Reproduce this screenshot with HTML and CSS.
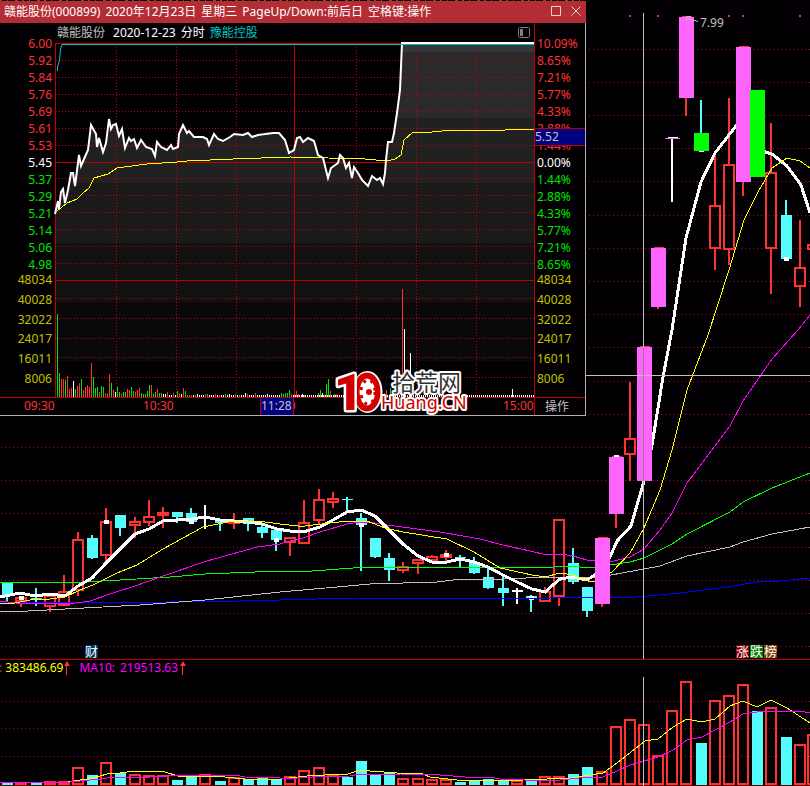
FILE: index.html
```html
<!DOCTYPE html>
<html lang="zh-CN">
<head>
<meta charset="utf-8">
<title>赣能股份(000899)</title>
<link rel="stylesheet" href="styles.css">
</head>
<body>
<main class="terminal">
  <section class="kline" aria-label="日K线">
    <svg class="chart" viewBox="0 0 810 659">
      <path class="ticker-edge" d="M0 .5H586"/>
      <path class="grid-sparse" d="M1 49.5H810M1 82.5H810M1 115.5H810M1 148.5H810M1 181.5H810M1 215.5H810M1 248.5H810M1 281.5H810M1 314.5H810M1 347.5H810M1 381.5H810M1 414.5H810M1 447.5H810M1 480.5H810M1 513.5H810M1 547.5H810M1 580.5H810M1 613.5H810M1 646.5H810"/>
      <g id="candles"></g>
      <polyline class="ma blue" points="0,602 170,602 240,601 280,600 355,598 550,598 637,597 680,593 727,587 757,582 780,581 810,578"/>
      <polyline class="ma gray" points="0,611 28,611 84,608 140,605 205,600 280,592 337,587 370,584 437,582 453,580 503,579 550,577 600,577 644,569 660,566 687,556 730,547 743,542 772,534 810,527"/>
      <polyline class="ma green" points="0,583 84,582 120,580 170,577 205,574 280,571 312,571 353,568 383,567 497,567 553,567 560,566 580,567 597,567 610,565 630,562 644,558 672,544 687,534 730,512 743,502 772,488 810,473"/>
      <polyline class="ma magenta" points="0,601 15,603 68,604 90,601 113,593 135,586 163,576 207,561 257,547 280,544 290,541 303,538 320,532 347,524 360,522 375,523 387,525 440,532 480,539 503,545 530,551 547,555 560,554 573,556 587,560 610,562 630,557 644,549 660,530 672,513 687,483 730,426 743,401 772,359 798,330 810,315"/>
      <polyline class="ma white" points="0,597 20,593 35,596 50,594 65,596 78,586 92,578 106,563 120,549 135,534 149,529 163,521 177,520 191,519 205,517 220,520 234,521 248,522 262,524 277,529 290,531 303,532 320,527 333,520 347,512 361,510 375,516 389,530 403,544 418,556 432,562 447,562 460,559 474,562 488,567 503,575 517,582 532,589 545,592 560,579 572,577 587,580 602,570 610,557 617,541 631,526 644,481 652,445 663,377 672,330 686,238 701,182 715,153 736,126 748,130 765,152 772,154 787,166 801,185 810,213"/>
      <polyline class="ma yellow" points="0,604 15,603 30,600 50,599 65,597 80,590 93,585 117,573 137,565 163,549 203,527 233,521 265,522 280,524 298,526 305,526 347,521 367,521 385,528 403,532 447,539 474,552 500,568 532,575 545,577 560,573 573,575 588,581 595,581 612,572 630,553 644,528 660,490 672,450 687,390 708,335 729,270 744,220 758,192 772,168 787,158 800,161 810,168"/>
      <g id="blocks"></g>
      <path class="signal" d="M629 15h2v2h-2zM657 15h2v2h-2zM728 15h2v2h-2zM742 15h2v2h-2zM799 15h2v2h-2z"/>
      <path class="crosshair" d="M643.5 13V659M586 375.5H810"/>
      <path class="crosshair-over" d="M643.5 347V481"/>
      <path class="pointer" d="M698 21.5L688 18.500M691 16.500H686.500V21"/>
      <text class="peak" x="700" y="27">7.99</text>
      <rect class="tag-news" x="85" y="645" width="13" height="13"/>
      <rect class="tag-up" x="736" y="645" width="13" height="13"/>
      <rect class="tag-down" x="750" y="645" width="13" height="13"/>
      <rect class="tag-list" x="764" y="645" width="13" height="13"/>
      <text class="tag" x="85" y="656">财</text>
      <text class="tag" x="736" y="656">涨</text>
      <text class="tag" x="750" y="656">跌</text>
      <text class="tag" x="764" y="656">榜</text>
    </svg>
  </section>

  <section class="volume" aria-label="成交量">
    <header class="volume-head">
      <span class="ma5"><i>:</i> 383486.69</span>
      <svg class="up" viewBox="0 0 6 14"><path d="M3 0L6 5H0zM2 4h1v10h-1z"/></svg>
      <span class="ma10"><span>MA10:</span><span>219513.63</span></span>
      <svg class="up" viewBox="0 0 6 14"><path d="M3 0L6 5H0zM2 4h1v10h-1z"/></svg>
    </header>
    <svg class="chart" viewBox="0 677 810 109">
      <path class="grid-sparse" d="M1 701.500H810M1 728.500H810M1 756.500H810"/>
      <g id="volumes"></g>
      <path class="base" d="M0 785.500H810"/>
      <polyline class="ma yellow" points="0,782 68,782 93,778 107,774 120,773 135,771 165,772 178,776 215,776 245,779 280,779 307,776 325,775 348,774 360,770 370,771 397,773 420,773 430,777 457,780 523,780 547,779 572,778 590,775 603,773 617,763 645,741 658,739 673,727 687,719 702,722 715,719 730,706 743,701 757,707 771,700 787,708 810,723"/>
      <polyline class="ma magenta" points="0,782 70,782 100,779 115,777 150,777 185,775 235,775 245,777 280,778 297,778 312,777 350,776 360,774 400,774 440,775 465,777 490,777 500,779 525,780 560,780 580,778 603,777 617,771 630,765 658,757 673,750 687,740 702,737 715,730 730,722 743,714 757,712 770,711 780,712 800,711 810,713"/>
      <path class="crosshair" d="M643.5 677V786"/>
    </svg>
  </section>

  <section class="window" aria-label="分时图">
    <header class="titlebar">
      <h1><span>赣能股份(000899)</span><span>2020年12月23日</span><span>星期三</span><span>PageUp/Down:前后日</span><span>空格键:操作</span></h1>
      <button type="button" aria-label="最大化"><svg viewBox="0 0 10 10"><path d="M.5.5h9v9h-9z"/></svg></button>
      <button type="button" aria-label="关闭"><svg viewBox="0 0 10 10"><path d="M.5.5l9 9M9.500.5l-9 9"/></svg></button>
    </header>
    <div class="board">
      <div class="axis left">
        <ol class="prices">
          <li>6.00</li><li>5.92</li><li>5.84</li><li>5.76</li><li>5.69</li><li>5.61</li><li>5.53</li>
          <li class="flat">5.45</li>
          <li class="down">5.37</li><li class="down">5.29</li><li class="down">5.21</li><li class="down">5.14</li><li class="down">5.06</li><li class="down">4.98</li>
        </ol>
        <ol class="amounts"><li>48034</li><li>40028</li><li>32022</li><li>24017</li><li>16011</li><li>8006</li></ol>
      </div>
      <div class="plot">
        <p class="caption">
          <span class="stock">赣能股份</span>
          <span>2020-12-23</span>
          <span>分时</span>
          <span class="peer">豫能控股</span>
          <button type="button" class="panel" aria-label="侧栏"><svg viewBox="0 0 12 11"><path class="frame" d="M1.500.5h9l1 1v8l-1 1h-9l-1-1v-8z"/><path class="bar" d="M2 2h3v7H2z"/></svg></button>
        </p>
        <svg class="chart" viewBox="55 43 479 355">
          <defs>
            <linearGradient id="shade" gradientUnits="userSpaceOnUse" x1="0" y1="43" x2="0" y2="398">
              <stop offset="0" stop-color="#373539"/><stop offset=".025" stop-color="#373539"/>
              <stop offset=".025" stop-color="#2b292c"/><stop offset=".211" stop-color="#2b292c"/>
              <stop offset=".211" stop-color="#222122"/><stop offset=".394" stop-color="#222122"/>
              <stop offset=".394" stop-color="#1a1a1a"/><stop offset=".563" stop-color="#1a1a1a"/>
              <stop offset=".563" stop-color="#111112"/><stop offset=".73" stop-color="#111112"/>
              <stop offset=".73" stop-color="#09080b"/><stop offset=".896" stop-color="#09080b"/>
              <stop offset=".896" stop-color="#020003"/>
            </linearGradient>
          </defs>
          <path class="area" d="M55 214L58 201 59 209 61 192 63 189 65 203 68 190 71 173 73 173 75 186 79 155 81 166 84 159 88 150 91 125 96 134 97 147 99 138 103 152 106 143 109 119 111 129 113 125 116 124 119 136 122 129 125 148 129 138 131 141 134 139 137 148 141 140 146 147 152 149 155 156 157 142 161 147 167 150 171 145 173 149 178 147 179 134 183 125 187 133 189 131 194 137 203 137 207 139 209 145 214 134 218 139 223 141 230 137 234 134 243 135 248 133 252 137 258 135 273 133 279 133 285 140 289 153 294 150 297 138 300 137 303 142 308 138 314 141 318 155 323 158 328 178 331 168 338 163 340 155 343 158 346 168 349 163 352 178 354 167 358 173 362 180 368 186 372 176 377 180 380 178 383 184 385 173 386 160 388 142 392 142 394 133 397 113 400 90 402 43H534V397H55z"/>
          <path class="grid-dense" d="M56 60.5H534M56 77.500H534M56 94.500H534M56 111.500H534M56 128.500H534M56 145.500H534M56 178.500H534M56 195.500H534M56 212.500H534M56 229.500H534M56 246.500H534M56 263.500H534M56 298.500H534M56 318.500H534M56 338.500H534M56 357.500H534M56 377.500H534M116.500 44V397M176.500 44V397M236.500 44V397M356.500 44V397M416.500 44V397M476.500 44V397"/>
          <path class="rule" d="M55 43.500H534M55.500 43V398M294.500 43V398M55 162.500H534M55 280.500H534"/>
          <path class="tiny" d="M165 396H534"/>
          <g id="minutes"></g>
          <path class="rule" d="M55 397.500H534"/>
          <polyline class="ma yellow" points="57,211 67,203 77,199 82,194 89,188 94,178 108,174 117,168 147,164 177,162 187,161 233,159 290,157 328,158 365,159 387,161 395,159 401,155 404,140 412,133 432,132 453,130 505,130 534,129"/>
          <polyline class="price" points="55,214 58,201 59,209 61,192 63,189 65,203 68,190 71,173 73,173 75,186 79,155 81,166 84,159 88,150 91,125 96,134 97,147 99,138 103,152 106,143 109,119 111,129 113,125 116,124 119,136 122,129 125,148 129,138 131,141 134,139 137,148 141,140 146,147 152,149 155,156 157,142 161,147 167,150 171,145 173,149 178,147 179,134 183,125 187,133 189,131 194,137 203,137 207,139 209,145 214,134 218,139 223,141 230,137 234,134 243,135 248,133 252,137 258,135 273,133 279,133 285,140 289,153 294,150 297,138 300,137 303,142 308,138 314,141 318,155 323,158 328,178 331,168 338,163 340,155 343,158 346,168 349,163 352,178 354,167 358,173 362,180 368,186 372,176 377,180 380,178 383,184 385,173 386,160 388,142 392,142 394,133 397,113 400,90 402,43 534,43"/>
          <path class="peer-line" d="M57.500 71V67L59.500 60 60.500 49 62 44.500H534"/>
          <g class="brand">
            <g class="wheel">
              <ellipse cx="367.500" cy="392" rx="13" ry="19"/>
              <ellipse class="rim" cx="367" cy="392" rx="10.500" ry="16.500"/>
              <ellipse class="hole" cx="368" cy="392" rx="7" ry="12"/>
              <ellipse class="teeth" cx="368" cy="392" rx="7" ry="12"/>
              <circle class="hub" cx="369" cy="392" r="3"/>
            </g>
            <text class="one" x="334" y="410">1</text>
            <text class="name" x="392" y="391">拾荒网</text>
            <text class="site" x="381" y="409">Huang.CN</text>
          </g>
        </svg>
      </div>
      <div class="axis right">
        <ol class="prices">
          <li>10.09%</li><li>8.65%</li><li>7.21%</li><li>5.77%</li><li>4.33%</li><li>2.88%</li><li>1.44%</li>
          <li class="flat">0.00%</li>
          <li class="down">1.44%</li><li class="down">2.88%</li><li class="down">4.33%</li><li class="down">5.77%</li><li class="down">7.21%</li><li class="down">8.65%</li>
        </ol>
        <ol class="amounts"><li>48034</li><li>40028</li><li>32022</li><li>24017</li><li>16011</li><li>8006</li></ol>
        <output class="cursor-price">5.52</output>
      </div>
    </div>
    <footer class="times">
      <span class="t-open">09:30</span>
      <span>10:30</span>
      <span class="t-noon">11:30<output class="cursor-time">11:28</output></span>
      <span class="t-close">15:00</span>
      <button type="button" class="action">操作</button>
    </footer>
  </section>
</main>
<script src="chart.js"></script>
</body>
</html>
```
FILE: styles.css
```css
* { box-sizing: border-box; }

body {
  margin: 0;
  background: #020003;
  color: #fff;
  font: 12px/17px "Noto Sans", "Noto Sans CJK SC", sans-serif;
}

h1, p, ol { margin: 0; padding: 0; font: inherit; }
ol { list-style: none; }

button {
  border: 0;
  padding: 0;
  background: none;
  color: inherit;
  font: inherit;
}

svg { display: block; }

.terminal { position: relative; overflow: hidden; }
.chart { width: 100%; height: auto; }

/* Lines shared by the charts */
.grid-sparse { stroke: #a81010; stroke-dasharray: 1 3; }
.grid-dense { stroke: #c00000; stroke-dasharray: 1 2; }
.rule { fill: none; stroke: #c00000; }
.base { stroke: #600; }
.ticker-edge { stroke: #6a5a20; stroke-dasharray: 2 5 1 7 3 4; }

.ma { fill: none; shape-rendering: crispEdges; }
.white { stroke: #fff; stroke-width: 3; }
.yellow { stroke: #ff0; }
.magenta { stroke: #f0f; }
.green { stroke: #0f0; }
.gray { stroke: #c0c0c0; }
.blue { stroke: #00f; }

.hollow { fill: none; stroke: #ff3232; stroke-width: 2; }
.red { fill: #ff3232; }
.cyan { fill: #54fcfc; }
.pink { fill: #ff64ff; }
.lime { fill: #0f0; }
.plain { fill: #fff; }
.minute-green { fill: #00e600; }

.signal { fill: #f0f; }
.crosshair { fill: none; stroke: #c0c0c0; }
.crosshair-over { stroke: #8a8a7a; }
.pointer { fill: none; stroke: #c0c0c0; }
.peak { fill: #c0c0c0; font-size: 12px; }

.tag { fill: #fff; font-size: 13px; }
.tag-news { fill: #036; }
.tag-up { fill: #800000; }
.tag-down { fill: #008000; }
.tag-list { fill: #804000; }

/* Volume pane */
.volume { border-top: 1px solid #c00000; }
.volume-head {
  display: flex;
  align-items: center;
  height: 17px;
  gap: 1px;
  line-height: 15px;
  padding-bottom: 2px;
  white-space: pre;
}
.ma5 { color: #ff0; margin-left: -1px; }
.ma5 i { color: #a05000; font-style: normal; }
.ma10 { display: flex; gap: 5px; color: #f0f; margin: 0 1px 0 8px; }
.up { width: 6px; height: 14px; fill: #ff3232; }

/* Intraday window */
.window {
  position: absolute;
  top: 1px;
  left: 0;
  width: 100%;
  max-width: 586px;
  background: #020003;
  border: solid #b0b0b0;
  border-width: 0 1px 1px 0;
}
.titlebar {
  display: flex;
  align-items: center;
  gap: 10px;
  height: 22px;
  padding: 0 5px 2px 4px;
  margin-right: -1px;
  background: #b42c34;
}
.titlebar h1 { display: flex; gap: 5px; flex: 1; white-space: nowrap; overflow: hidden; }
.titlebar button svg { width: 10px; height: 10px; fill: none; stroke: #f0d0d0; }

.board { display: grid; grid-template-columns: 55px 1fr 51px; }
.axis { padding-top: 12px; position: relative; }
.left { text-align: right; padding-right: 3px; }
.right { border-left: 1px solid #c00000; padding-left: 2px; }
.prices {
  display: flex;
  flex-direction: column;
  justify-content: space-between;
  height: 236px;
  color: #ff3232;
}
.prices .flat { color: #fff; }
.prices .down { color: #00e600; }
.amounts {
  display: flex;
  flex-direction: column;
  justify-content: space-between;
  height: 116px;
  color: #c0c000;
}

.plot { display: flex; flex-direction: column; }
.plot .chart { overflow: visible; }
.caption {
  display: flex;
  align-items: center;
  gap: 5px;
  height: 20px;
  padding: 0 4px 2px 2px;
  white-space: nowrap;
}
.stock { color: #c0c0c0; margin-right: 3px; }
.peer { color: #00c0c0; }
.panel { margin-left: auto; }
.panel svg { width: 12px; height: 11px; }
.frame { fill: none; stroke: #808080; }
.bar { fill: #808080; }

.area { fill: url(#shade); }
.price { fill: none; stroke: #fff; stroke-width: 2; }
.peer-line { fill: none; stroke: #00c0c0; }
.tiny { stroke: #fff; stroke-width: 2; stroke-dasharray: 1 1; }

.cursor-price {
  position: absolute;
  top: 105px;
  left: 0;
  right: 0;
  height: 18px;
  border: solid #c00000;
  border-width: 1px 0;
  background: #000080;
  color: #c0c0c0;
  line-height: 15px;
}

.times {
  display: grid;
  grid-template-columns: 143px 122px 1fr 31px 51px;
  height: 17px;
  line-height: 15px;
  color: #ff3232;
}
.t-open { padding-left: 24px; }
.t-noon { position: relative; }
.cursor-time {
  position: absolute;
  top: 0;
  left: -5px;
  width: 34px;
  height: 17px;
  border: solid #c00000;
  border-width: 0 1px;
  background: #000080;
  color: #c0c0c0;
}
.action {
  border-left: 1px solid #c00000;
  border-top: 1px solid #c00000;
  margin-top: -1px;
  padding: 0 6px 0 0;
  color: #c0c0c0;
}
.times span:first-child { border-top: 1px solid #c00000; margin-top: -1px; }

/* Site mark */
.brand text { paint-order: stroke; stroke: #fff; stroke-linejoin: round; }
.brand .one { fill: #d00000; stroke-width: 5; font: 900 50px Roboto, sans-serif; }
.brand .name { fill: #333; stroke-width: 4; font: 23px "Noto Sans CJK SC", sans-serif; }
.brand .site { fill: #d00000; stroke-width: 4; font: 18px "Noto Sans", sans-serif; }
.wheel { fill: #fff; stroke: #fff; stroke-width: 4; }
.wheel .rim { fill: none; stroke: #d00000; stroke-width: 6; }
.wheel .hole { stroke: none; }
.wheel .teeth { fill: none; stroke: #d00000; stroke-width: 3; stroke-dasharray: 3 5; }
.wheel .hub { fill: #d00000; stroke: none; }
```
FILE: chart.js
```js
const NS = "http://www.w3.org/2000/svg";

function rect(parent, cls, x, y, w, h) {
  const el = document.createElementNS(NS, "rect");
  el.setAttribute("class", cls);
  el.setAttribute("x", x);
  el.setAttribute("y", y);
  el.setAttribute("width", w);
  el.setAttribute("height", h);
  parent.appendChild(el);
}

// Kind, centre, body top, body bottom, wick top, wick bottom, close mark.
// r rising, c falling, w unchanged, p limit up, g limit down
const days = [
  ["c",7,583,595,583,602],["r",21,597,602,597,607,596],["c",36,598,599,588,606],["r",50,595,607,595,612],
  ["r",64,591,606,575,606],["r",78,539,591,532,596],["c",92,538,558,535,559],["r",106,521,556,508,562,520],
  ["c",120,515,528,515,536],["r",135,521,526,517,538],["r",149,516,523,500,526],["r",163,512,516,507,528],
  ["c",177,512,517,512,523],["c",191,513,522,508,522,520],["w",205,517,518,505,529],["c",220,519,523,519,531],
  ["r",234,521,524,513,529],["c",248,518,524,518,531],["c",262,527,533,525,538],["c",276,530,540,530,551,538],
  ["r",290,537,543,537,556],["r",304,522,544,500,544],["r",319,499,521,489,524],["r",333,498,503,492,508],
  ["c",347,499,500,497,512],["c",361,518,525,513,571,523],["c",375,538,557,538,558],["c",389,558,570,553,581],
  ["r",403,566,571,562,573],["r",418,559,564,559,574],["r",432,556,561,555,561],["r",446,554,558,550,562,553],
  ["c",460,557,558,555,567],["c",474,562,573,557,574],["c",488,577,588,567,589],["c",503,588,593,575,606],
  ["w",517,590,592,588,604],["c",531,596,598,595,612,596],["r",545,591,602,587,602],["r",559,519,597,519,606],
  ["c",573,563,582,548,584],["c",587,587,611,587,617],["p",602,538,604,537,607],["p",616,457,514,456,528],
  ["r",630,438,455,382,481],["p",644,347,481,346,481],["p",658,248,307,247,309],["w",672,138,139,138,202],
  ["p",686,17,98,17,116],["g",701,133,151,100,151],["r",715,205,249,152,270],["r",729,164,250,98,265],
  ["p",743,47,182,46,196],["g",757,90,177,90,177],["r",771,172,249,123,294],["c",786,215,259,200,259,257],
  ["r",800,267,287,220,307],["r",813,244,250,244,250]
];

const volumeTops = [
  783,782,783,781,781,767,775,762,773,774,775,775,780,777,774,781,777,779,778,779,
  776,770,767,775,777,761,775,773,778,778,779,779,782,781,779,781,780,781,776,776,
  774,767,771,726,719,724,755,710,681,743,700,695,684,711,707,737,744,734
];

const candles = document.getElementById("candles");
const blocks = document.getElementById("blocks");
const volumes = document.getElementById("volumes");

days.forEach(([kind, x, top, bottom, high, low, mark], i) => {
  const wick = { r: "red", c: "cyan", w: "plain", p: "red", g: "cyan" }[kind];
  if (high < top) rect(candles, wick, x - 1, high, 2, top - high);
  if (low > bottom) rect(candles, wick, x - 1, bottom, 2, low - bottom);
  if (kind === "r") rect(candles, "hollow", x - 5, top + 1, 10, Math.max(bottom - top - 2, 1));
  if (kind === "c" || kind === "w") rect(candles, wick, x - 5, top, 11, bottom - top);
  if (kind === "p" || kind === "g") {
    if (kind === "p") rect(blocks, "red", x - 4, top - 1, 10, 1);
    rect(blocks, kind === "p" ? "pink" : "lime", x - 7, top, 15, bottom - top);
  }
  if (mark) rect(candles, "plain", x - 2, mark, 5, 4);

  const y = volumeTops[i];
  const falling = kind === "c" || x === 701 || x === 757;
  if (falling) rect(volumes, "cyan", x - 5, y, 11, 785 - y);
  else rect(volumes, "hollow", x - 5, y + 1, 10, Math.max(783 - y, 1));
});
rect(blocks, "plain", 614, 455, 5, 2);
rect(blocks, "plain", 668, 137, 10, 1);
rect(blocks, "pink", 665, 138, 15, 1);
rect(blocks, "plain", 699, 151, 5, 1);

// Minute bars: colour, x, top
const minutes = "g57,314 g59,373 r61,379 r63,379 g65,380 r67,376 r69,389 r71,388 w73,381 g75,389 r77,386 r79,383 g81,379 r83,390 r85,387 r87,385 r89,387 r91,363 g93,377 g95,388 g97,387 r99,392 g101,386 g103,387 r105,393 r107,393 r109,374 g111,383 r113,390 w115,392 g117,387 g119,392 r121,393 g123,392 g125,392 r127,389 r129,390 g131,387 g133,391 r135,392 r137,390 r139,388 g141,393 g143,394 g145,394 g147,391 g149,385 r151,385 g153,394 g155,392 r157,389 g159,393 g161,393 w163,394 w165,394 r167,392 w171,395 r173,393 g177,391 r179,393 w181,394 r183,388 g185,391 g187,395 g189,395 r191,395 g195,395 w197,394 r205,394 g207,394 r215,394 r219,395 g225,394 w229,394 r235,394 g239,395 w245,393 r247,394 r255,393 w267,394 g281,393 g283,394 g285,393 g287,393 g289,390 r291,394 r294,394 r296,391 r298,394 w302,394 g304,395 g318,393 g320,390 w322,393 r324,395 g326,384 g328,379 r330,391 g334,394 r336,394 r384,393 r386,390 g390,388 r402,289 w404,329 w410,353 w512,389";
const group = document.getElementById("minutes");
for (const item of minutes.split(" ")) {
  const [x, y] = item.slice(1).split(",").map(Number);
  rect(group, { g: "minute-green", r: "red", w: "plain" }[item[0]], x, y, 1, 397 - y);
}
```
